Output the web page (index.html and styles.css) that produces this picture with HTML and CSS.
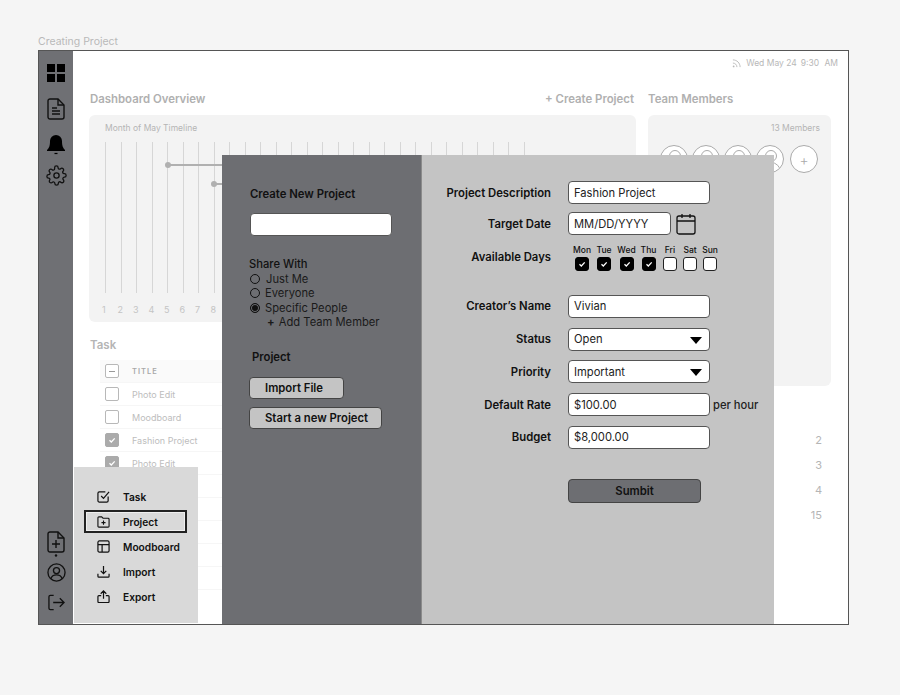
FILE: index.html
```html
<!DOCTYPE html>
<html lang="en">
<head>
<meta charset="utf-8">
<title>Creating Project</title>
<link rel="stylesheet" href="styles.css">
</head>
<body>
<div class="page-title">Creating Project</div>
<div class="frame">
  <aside class="sidebar">
    <div class="side-group">
      <svg class="si si-grid" viewBox="0 0 18 18"><rect width="8" height="8"/><rect x="10" width="8" height="8"/><rect y="10" width="8" height="8"/><rect x="10" y="10" width="8" height="8"/></svg>
      <svg class="si si-doc" viewBox="0 0 18 22" fill="none" stroke="#111" stroke-width="1.4"><path d="M3 1h8l6 6v12a2 2 0 0 1-2 2H3a2 2 0 0 1-2-2V3a2 2 0 0 1 2-2z"/><path d="M11 1v6h6M5 10h5M5 13h8M5 16h8"/></svg>
      <svg class="si si-bell" viewBox="0 0 18 20"><path d="M9 0a6 6 0 0 0-6 6c0 5-1 7-3 9v1h18v-1c-2-2-3-4-3-9a6 6 0 0 0-6-6z" fill="#000"/><path d="M7.500 18.500h3" stroke="#000" stroke-width="1.200"/></svg>
      <svg class="si si-gear" viewBox="0 0 24 24" fill="none" stroke="#111" stroke-width="1.500" stroke-linejoin="round"><circle cx="12" cy="12" r="3"/><path d="M19.400 15a1.650 1.650 0 0 0 .33 1.820l.06.06a2 2 0 1 1-2.830 2.830l-.06-.06a1.650 1.650 0 0 0-2.800 1.170V21a2 2 0 1 1-4 0v-.09a1.650 1.650 0 0 0-2.820-1.110l-.06.06a2 2 0 1 1-2.830-2.830l.06-.06A1.650 1.650 0 0 0 3.090 15H3a2 2 0 1 1 0-4h.09a1.650 1.650 0 0 0 1.110-2.820l-.06-.06a2 2 0 1 1 2.830-2.830l.06.06A1.650 1.650 0 0 0 9.850 4.180V3a2 2 0 1 1 4 0v.09a1.650 1.650 0 0 0 2.800 1.170l.06-.06a2 2 0 1 1 2.830 2.830l-.06.06a1.650 1.650 0 0 0 1.170 2.800H21a2 2 0 1 1 0 4h-.09a1.650 1.650 0 0 0-1.510 1.110z"/></svg>
    </div>
    <div class="side-group side-bottom">
      <svg class="si si-new" viewBox="0 0 18 26" fill="none" stroke="#111" stroke-width="1.400"><path d="M3 1h8l6 6v12a2 2 0 0 1-2 2H3a2 2 0 0 1-2-2V3a2 2 0 0 1 2-2z"/><path d="M11 1v6h6M9 9v8M5 13h8"/><circle cx="9" cy="24.500" r="1.200" fill="#111" stroke="none"/></svg>
      <svg class="si si-user" viewBox="0 0 20 20" fill="none" stroke="#111" stroke-width="1.400"><circle cx="10" cy="10" r="9"/><circle cx="10" cy="8" r="3.200"/><path d="M4 16.500c1-3 3.500-4 6-4s5 1 6 4"/></svg>
      <svg class="si si-out" viewBox="0 0 18 17" fill="none" stroke="#111" stroke-width="1.400"><path d="M6 1H2.500A1.500 1.500 0 0 0 1 2.500v12A1.500 1.500 0 0 0 2.500 16H6M5.500 8.500H17M12.500 4l4.500 4.500-4.500 4.500"/></svg>
    </div>
  </aside>

  <main class="main">
    <div class="status">
      <svg class="rss" viewBox="0 0 10 10" fill="none" stroke="#b8b8b8" stroke-width="1"><path d="M1 1c4.500 0 8 3.500 8 8M1 4.500c2.500 0 4.500 2 4.500 4.500"/><circle cx="1.800" cy="8.200" r="1" fill="#b8b8b8" stroke="none"/></svg>
      <span>Wed May 24</span><span class="time">9:30 AM</span>
    </div>
    <div class="board">
      <section class="col-left">
        <div class="head-row"><h2>Dashboard Overview</h2><h2>+ Create Project</h2></div>
        <div class="panel timeline">
          <div class="panel-label">Month of May Timeline</div>
          <div class="chart">
            <i></i><i></i><i></i><i></i><i></i><i></i><i></i><i></i><i></i><i></i><i></i><i></i><i></i><i></i><i></i><i></i><i></i><i></i><i></i><i></i><i></i><i></i><i></i><i></i><i></i><i></i><i></i><i></i>
            <div class="gantt gantt-a"></div>
            <div class="gantt gantt-b"></div>
          </div>
          <div class="scale"><span>1</span><span>2</span><span>3</span><span>4</span><span>5</span><span>6</span><span>7</span><span>8</span></div>
        </div>
        <h2 class="task-head">Task</h2>
        <div class="table">
          <div class="tr th"><span class="cb"><b class="minus"></b></span><span class="th-title">TITLE</span></div>
          <div class="tr"><span class="cb"></span><span>Photo Edit</span></div>
          <div class="tr"><span class="cb"></span><span>Moodboard</span></div>
          <div class="tr"><span class="cb on"><svg viewBox="0 0 10 10"><path d="M2.500 5.200l1.800 1.800 3.400-3.600" fill="none" stroke="#fff" stroke-width="1.300"/></svg></span><span>Fashion Project</span></div>
          <div class="tr"><span class="cb on"><svg viewBox="0 0 10 10"><path d="M2.500 5.200l1.800 1.800 3.400-3.600" fill="none" stroke="#fff" stroke-width="1.300"/></svg></span><span>Photo Edit</span></div>
          <div class="tr"></div><div class="tr"></div><div class="tr"></div><div class="tr"></div><div class="tr"></div>
        </div>
      </section>
      <section class="col-right">
        <div class="head-row team-head"><h2>Team Members</h2></div>
        <div class="panel team">
          <div class="members-count">13 Members</div>
          <div class="avatars">
            <span class="avatar"></span><span class="avatar"></span><span class="avatar"></span><span class="avatar"></span><span class="avatar-add">+</span>
          </div>
        </div>
        <div class="counts"><span>2</span><span>3</span><span>4</span><span>15</span></div>
      </section>
    </div>
  </main>

  <nav class="popup">
    <a class="pop-item"><svg viewBox="0 0 14 14" fill="none" stroke="#111" stroke-width="1.300"><path d="M12 7v4.500a1.500 1.500 0 0 1-1.500 1.500h-8A1.500 1.500 0 0 1 1 11.500v-8A1.500 1.500 0 0 1 2.500 2H9"/><path d="M4.500 6.500L7 9l6-7"/></svg>Task</a>
    <a class="pop-item active"><svg viewBox="0 0 14 14" fill="none" stroke="#111" stroke-width="1.200"><path d="M1 3a1 1 0 0 1 1-1h3l1.500 1.500H12a1 1 0 0 1 1 1V12a1 1 0 0 1-1 1H2a1 1 0 0 1-1-1z"/><path d="M7 6v4.500M4.800 8.200h4.400"/></svg>Project</a>
    <a class="pop-item"><svg viewBox="0 0 14 14" fill="none" stroke="#111" stroke-width="1.300"><rect x="1" y="1" width="12" height="12" rx="1.500"/><path d="M1 5h12M5.500 5v8"/></svg>Moodboard</a>
    <a class="pop-item"><svg viewBox="0 0 14 14" fill="none" stroke="#111" stroke-width="1.300"><path d="M7 1v8M4 6.300L7 9.300l3-3M1 9.500V12a1 1 0 0 0 1 1h10a1 1 0 0 0 1-1V9.500"/></svg>Import</a>
    <a class="pop-item"><svg viewBox="0 0 14 14" fill="none" stroke="#111" stroke-width="1.300"><path d="M7 9.500V1M4 4l3-3 3 3M4.500 6H2a1 1 0 0 0-1 1v5.500a1 1 0 0 0 1 1h10a1 1 0 0 0 1-1V7a1 1 0 0 0-1-1H9.500"/></svg>Export</a>
  </nav>

  <div class="modal">
    <div class="modal-left">
      <div class="ml-title">Create New Project</div>
      <div class="field name-field"></div>
      <div class="share">
        <div class="share-title">Share With</div>
        <label class="radio"><span class="dot"></span><span class="just">Just Me</span></label>
        <label class="radio"><span class="dot"></span>Everyone</label>
        <label class="radio"><span class="dot sel"></span>Specific People</label>
        <div class="add-member"><b>+</b> Add Team Member</div>
      </div>
      <div class="project-title">Project</div>
      <div class="btn btn-import">Import File</div>
      <div class="btn btn-start">Start a new Project</div>
    </div>
    <div class="modal-right">
      <div class="row r-desc"><label>Project Description</label><div class="field">Fashion Project</div></div>
      <div class="row r-date"><label>Target Date</label><div class="field short">MM/DD/YYYY</div>
        <svg class="cal" viewBox="0 0 20 22" fill="none" stroke="#111" stroke-width="1.300"><rect x="1" y="3" width="18" height="18" rx="2"/><path d="M1 8h18M6 1v4M14 1v4"/></svg>
      </div>
      <div class="row r-days"><label>Available Days</label>
        <div class="days">
          <div class="day"><span>Mon</span><i class="box on"><svg viewBox="0 0 10 10"><path d="M2.500 5.200l1.800 1.800 3.400-3.600" fill="none" stroke="#fff" stroke-width="1.300"/></svg></i></div>
          <div class="day"><span>Tue</span><i class="box on"><svg viewBox="0 0 10 10"><path d="M2.500 5.200l1.800 1.800 3.400-3.600" fill="none" stroke="#fff" stroke-width="1.300"/></svg></i></div>
          <div class="day"><span>Wed</span><i class="box on"><svg viewBox="0 0 10 10"><path d="M2.500 5.200l1.800 1.800 3.400-3.600" fill="none" stroke="#fff" stroke-width="1.300"/></svg></i></div>
          <div class="day"><span>Thu</span><i class="box on"><svg viewBox="0 0 10 10"><path d="M2.500 5.200l1.800 1.800 3.400-3.600" fill="none" stroke="#fff" stroke-width="1.300"/></svg></i></div>
          <div class="day"><span>Fri</span><i class="box"></i></div>
          <div class="day"><span>Sat</span><i class="box"></i></div>
          <div class="day"><span>Sun</span><i class="box"></i></div>
        </div>
      </div>
      <div class="row"><label>Creator’s Name</label><div class="field">Vivian</div></div>
      <div class="row"><label>Status</label><div class="field select">Open<em class="caret"></em></div></div>
      <div class="row"><label>Priority</label><div class="field select">Important<em class="caret"></em></div></div>
      <div class="row"><label>Default Rate</label><div class="field">$100.00</div><span class="unit">per hour</span></div>
      <div class="row"><label>Budget</label><div class="field">$8,000.00</div></div>
      <div class="submit">Sumbit</div>
    </div>
  </div>
</div>
</body>
</html>
```
FILE: styles.css
```css
* { box-sizing: border-box; }
html, body { margin: 0; height: 100%; }
body {
  background: #f5f5f5;
  font-family: Inter, "Liberation Sans", sans-serif;
  color: #111;
  padding: 35px 0 0 38px;
  overflow: hidden;
}
h2 { margin: 0; font-size: 11.400px; font-weight: 600; color: #b0b0b0; line-height: 14px; }
svg { display: block; }

.page-title { font-size: 10.500px; line-height: 13px; color: #b9b9b9; height: 15px; }

.frame {
  position: relative;
  width: 811px;
  height: 575px;
  border: 1px solid #555;
  background: #fff;
  display: flex;
  overflow: hidden;
}

/* sidebar */
.sidebar {
  width: 34px;
  flex: none;
  background: #6f7074;
  display: flex;
  flex-direction: column;
  justify-content: space-between;
  align-items: center;
  padding: 13px 0;
}
.side-group { display: flex; flex-direction: column; align-items: center; }
.si-grid { width: 18px; height: 18px; }
.si-doc { width: 18px; height: 22px; margin-top: 16px; }
.si-bell { width: 18px; height: 20px; margin-top: 15px; }
.si-gear { width: 21px; height: 21px; margin-top: 10px; }
.si-new { width: 18px; height: 26px; }
.si-user { width: 19px; height: 19px; margin-top: 6px; }
.si-out { width: 17px; height: 17px; margin-top: 12px; }

/* main */
.main { flex: 1; min-width: 0; padding: 0 16px; }
.status {
  display: flex;
  justify-content: flex-end;
  align-items: center;
  gap: 4px;
  height: 24px;
  margin-right: -6px;
  font-size: 8.500px;
  color: #b8b8b8;
}
.time { word-spacing: 3px; }
.rss { width: 9px; height: 9px; margin-right: 1px; }
.board { display: grid; grid-template-columns: 547px 183px; column-gap: 12px; margin-top: 17px; }
.head-row { display: flex; justify-content: space-between; padding: 0 2px 0 1px; height: 16px; }
.team-head { padding-left: 0; }
.panel { background: #f3f3f3; border-radius: 6px; margin-top: 7px; }

.timeline { position: relative; height: 207px; padding: 7px 16px; }
.panel-label { font-size: 8.500px; line-height: 12px; color: #b5b5b5; }
.chart {
  position: relative;
  display: grid;
  grid-template-columns: repeat(28, 15.500px);
  height: 151px;
  margin-top: 8px;
}
.chart i { display: block; width: 1px; height: 100%; background: #d6d6d6; }
.gantt { position: absolute; height: 2px; background: #b0b0b0; }
.gantt::before {
  content: "";
  position: absolute;
  left: -3px;
  top: -2px;
  width: 6px;
  height: 6px;
  border-radius: 50%;
  background: #b0b0b0;
}
.gantt-a { left: 63px; top: 22px; width: 140px; }
.gantt-b { left: 109px; top: 41px; width: 60px; }
.scale { display: grid; grid-template-columns: repeat(8, 15.500px); margin-top: 11px; margin-left: -3px; font-size: 9px; line-height: 11px; color: #c4c4c4; }

.task-head { margin: 16px 0 0 1px; font-size: 11.500px; color: #b5b5b5; }
.table { margin: 8px 0 0 11px; }
.tr {
  display: flex;
  align-items: center;
  height: 23px;
  padding-left: 5px;
  font-size: 9px;
  color: #bdbdbd;
  border-bottom: 1px solid #f6f6f6;
}
.th { background: #fafafa; }
.th-title { font-size: 7.500px; font-weight: 600; letter-spacing: 1px; color: #a8a8a8; }
.cb {
  display: flex;
  align-items: center;
  justify-content: center;
  flex: none;
  width: 14px;
  height: 14px;
  margin-right: 13px;
  border: 1px solid #b8b8b8;
  border-radius: 2px;
  background: #fff;
}
.cb.on { background: #ababab; border-color: #ababab; }
.cb svg { width: 10px; height: 10px; }
.minus { width: 6px; height: 1px; background: #999; }

.team { height: 271px; padding: 7px 11px 0 12px; }
.members-count { text-align: right; font-size: 8.500px; line-height: 12px; color: #b5b5b5; }
.avatars { display: flex; gap: 4px; margin-top: 11px; }
.avatar, .avatar-add {
  flex: none;
  width: 28px;
  height: 28px;
  border: 1px solid #aaa;
  border-radius: 50%;
  background: #fff;
}
.avatar { position: relative; overflow: hidden; }
.avatar::before {
  content: "";
  position: absolute;
  left: 8px;
  top: 4px;
  width: 10px;
  height: 10px;
  border: 1px solid #aaa;
  border-radius: 50%;
}
.avatar::after {
  content: "";
  position: absolute;
  left: 4px;
  top: 16px;
  width: 18px;
  height: 18px;
  border: 1px solid #aaa;
  border-radius: 50%;
}
.avatar-add { display: flex; align-items: center; justify-content: center; font-size: 14px; font-weight: 300; color: #aaa; margin-left: 2px; }
.counts { display: flex; flex-direction: column; align-items: flex-end; gap: 11px; margin-top: 47px; padding-right: 9px; font-size: 11px; line-height: 14px; color: #b5b5b5; }

/* popup */
.popup {
  position: absolute;
  left: 35px;
  top: 416px;
  width: 124px;
  height: 156px;
  background: #d9d9d9;
  padding-top: 18px;
}
.pop-item {
  display: flex;
  align-items: center;
  gap: 13px;
  width: 103px;
  height: 23px;
  margin: 0 0 2px 10px;
  padding-left: 13px;
  font-size: 10.200px;
  font-weight: 600;
  color: #111;
}
.pop-item svg { width: 13px; height: 13px; flex: none; }
.pop-item.active { outline: 2px solid #222; outline-offset: -2px; box-shadow: inset 0 0 0 3px #efefef; }

/* modal */
.modal {
  position: absolute;
  left: 183px;
  top: 104px;
  width: 552px;
  height: 470px;
  display: flex;
}
.modal-left { width: 199px; flex: none; background: #6d6e72; padding: 32px 0 0 27px; color: #111; }
.modal-right { flex: 1; background: #c4c4c4; border-left: 1px solid #8b8b8b; padding: 26px 0 0 0; }

.field {
  width: 142px;
  height: 23px;
  flex: none;
  display: flex;
  align-items: center;
  padding-left: 5px;
  background: #fff;
  border: 1px solid #555;
  border-radius: 4px;
  font-size: 11.200px;
  color: #222;
}
.ml-title { font-size: 11.300px; line-height: 14px; font-weight: 600; margin-left: 1px; }
.name-field { margin: 12px 0 0 1px; }
.share { margin-top: 21px; font-size: 11.200px; line-height: 14.600px; color: #1a1a1a; }
.share-title { font-weight: 500; color: #111; }
.radio { display: flex; align-items: center; gap: 5px; }
.dot { width: 10px; height: 10px; border: 1.500px solid #111; border-radius: 50%; margin-left: 1px; }
.dot.sel { background: #111; box-shadow: inset 0 0 0 1px #6d6e72; }
.just { margin-left: 1px; }
.add-member { margin-left: 18px; }
.add-member b { font-weight: 700; margin-right: 1px; }
.project-title { margin: 20px 0 0 3px; font-size: 11.300px; line-height: 14px; font-weight: 600; }
.btn {
  display: flex;
  align-items: center;
  height: 22px;
  margin-top: 13px;
  padding-left: 15px;
  background: #c4c4c4;
  border: 1px solid #444;
  border-radius: 4px;
  font-size: 11.300px;
  font-weight: 600;
  color: #111;
}
.btn-import { width: 95px; }
.btn-start { width: 133px; margin-top: 8px; }

.row { display: flex; align-items: center; height: 23px; margin-bottom: 9.750px; }
.row label { width: 129px; margin-right: 17px; text-align: right; font-size: 11.300px; font-weight: 600; color: #111; flex: none; }
.r-desc { margin-bottom: 8px; }
.short { width: 103px; }
.cal { width: 20px; height: 22px; margin-left: 5px; }
.r-days { height: 27px; margin-bottom: 23px; margin-top: 2px; }
.r-days label { margin-top: -2px; }
.days {
  display: grid;
  grid-template-columns: 22px 22px 23px 21px 22px 18px 22px;
  margin-left: 3px;
  margin-right: -20px;
}
.day { display: flex; flex-direction: column; align-items: center; }
.day span { font-size: 8.500px; line-height: 11px; font-weight: 500; color: #111; white-space: nowrap; }
.box { display: flex; align-items: center; justify-content: center; width: 14px; height: 14px; margin-top: 1px; border: 1px solid #222; border-radius: 3px; background: #fff; }
.box.on { background: #000; border-color: #000; }
.box svg { width: 10px; height: 10px; }
.select { position: relative; }
.caret {
  position: absolute;
  right: 7px;
  top: 8px;
  width: 0;
  height: 0;
  border-left: 6px solid transparent;
  border-right: 6px solid transparent;
  border-top: 7px solid #000;
}
.unit { margin-left: 3px; font-size: 11.200px; font-weight: 500; color: #222; }
.submit {
  display: flex;
  align-items: center;
  justify-content: center;
  width: 133px;
  height: 24px;
  margin: 30px 0 0 146px;
  background: #6d6e72;
  border: 1px solid #444;
  border-radius: 4px;
  font-size: 11.300px;
  font-weight: 600;
  color: #111;
}
```
